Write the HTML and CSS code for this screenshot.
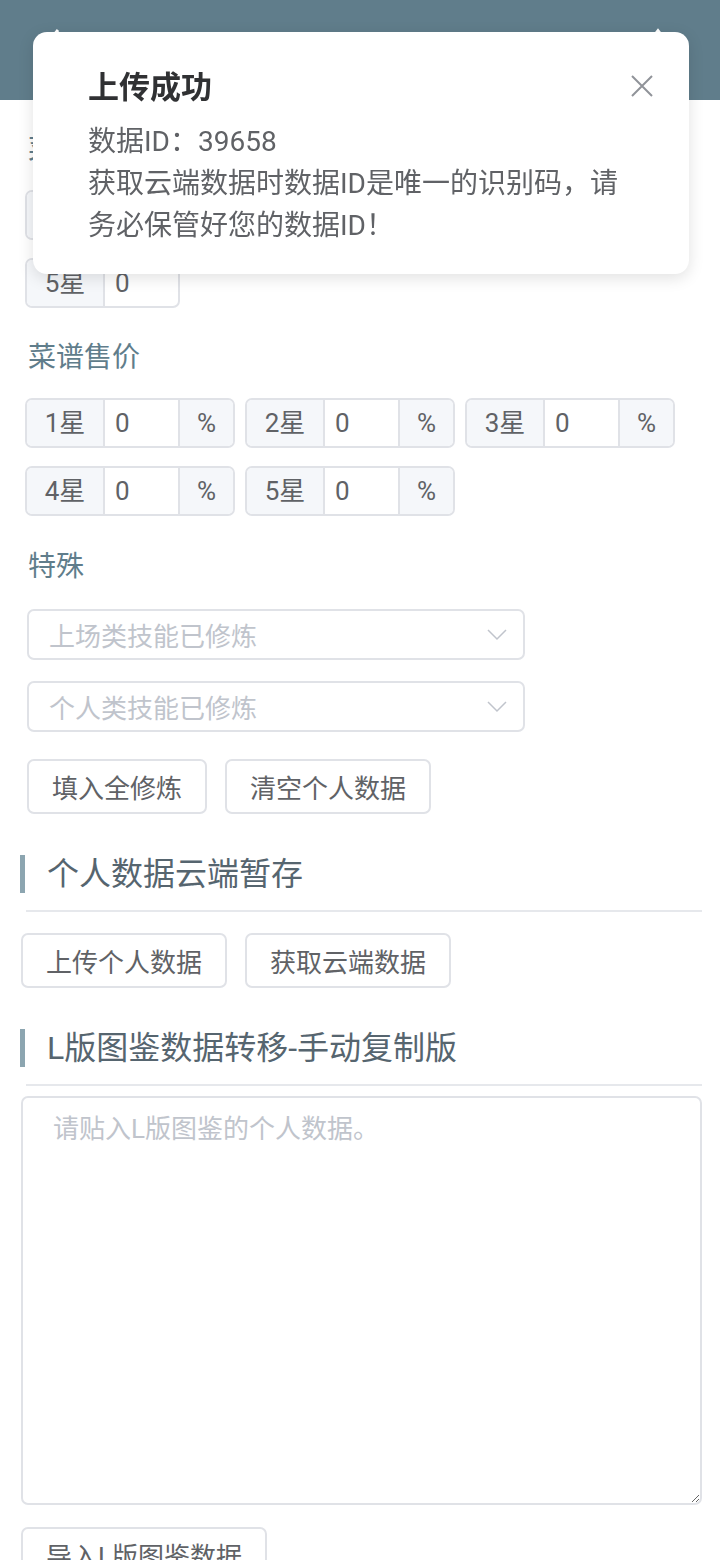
FILE: index.html
```html
<!DOCTYPE html>
<html>
<head>
    <meta charset="UTF-8">
    <title>个人数据</title>
    <link rel="stylesheet" href="styles.css">
</head>
<body>
    <div class="header">
        <span class="header-back">
            <svg width="30" height="44" viewBox="0 0 30 44"><path d="M22 2L6 22l16 20" fill="none" stroke="#fff" stroke-width="3"/></svg>
        </span>
        <span class="header-set">
            <svg width="44" height="44" viewBox="0 0 24 24"><path d="M12 1.5l2 2.6 3.2-.7.6 3.2 3 1.4-1.4 3 1.4 3-3 1.4-.6 3.2-3.2-.7-2 2.6-2-2.6-3.2.7-.6-3.2-3-1.4 1.4-3-1.4-3 3-1.4.6-3.2 3.2.7z" fill="none" stroke="#fff" stroke-width="1.6"/><circle cx="12" cy="12" r="3.5" fill="none" stroke="#fff" stroke-width="1.6"/></svg>
        </span>
    </div>

    <div class="page">
        <div class="form-label">菜谱数量</div>
        <div class="group-list">
            <div class="input-group"><span class="prepend">1星</span><span class="value">0</span></div>
            <div class="input-group"><span class="prepend">2星</span><span class="value">0</span></div>
            <div class="input-group"><span class="prepend">3星</span><span class="value">0</span></div>
            <div class="input-group"><span class="prepend">4星</span><span class="value">0</span></div>
            <div class="input-group"><span class="prepend">5星</span><span class="value">0</span></div>
        </div>

        <div class="form-label">菜谱售价</div>
        <div class="group-list">
            <div class="input-group"><span class="prepend">1星</span><span class="value">0</span><span class="append">%</span></div>
            <div class="input-group"><span class="prepend">2星</span><span class="value">0</span><span class="append">%</span></div>
            <div class="input-group"><span class="prepend">3星</span><span class="value">0</span><span class="append">%</span></div>
            <div class="input-group"><span class="prepend">4星</span><span class="value">0</span><span class="append">%</span></div>
            <div class="input-group"><span class="prepend">5星</span><span class="value">0</span><span class="append">%</span></div>
        </div>

        <div class="form-label label-special">特殊</div>
        <div class="select">
            <span class="placeholder">上场类技能已修炼</span>
            <svg width="20" height="12" viewBox="0 0 20 12"><path d="M1 1l9 9 9-9" fill="none" stroke="#c0c4cc" stroke-width="1.5"/></svg>
        </div>
        <div class="select">
            <span class="placeholder">个人类技能已修炼</span>
            <svg width="20" height="12" viewBox="0 0 20 12"><path d="M1 1l9 9 9-9" fill="none" stroke="#c0c4cc" stroke-width="1.5"/></svg>
        </div>
        <div class="btn-row btn-row-inner">
            <button class="btn">填入全修炼</button>
            <button class="btn">清空个人数据</button>
        </div>

        <div class="section-title">个人数据云端暂存</div>
        <div class="divider"></div>
        <div class="btn-row">
            <button class="btn">上传个人数据</button>
            <button class="btn">获取云端数据</button>
        </div>

        <div class="section-title">L版图鉴数据转移-手动复制版</div>
        <div class="divider divider-tight"></div>
        <textarea class="paste" placeholder="请贴入L版图鉴的个人数据。"></textarea>
        <div class="btn-row btn-row-last">
            <button class="btn">导入L版图鉴数据</button>
        </div>
    </div>

    <div class="notification">
        <div class="notification-title">上传成功</div>
        <div class="notification-body">
            <p>数据ID：39658</p>
            <p>获取云端数据时数据ID是唯一的识别码，请务必保管好您的数据ID！</p>
        </div>
        <span class="notification-close">
            <svg width="22" height="22" viewBox="0 0 22 22"><path d="M1 1l20 20M21 1L1 21" stroke="#909399" stroke-width="2"/></svg>
        </span>
    </div>
</body>
</html>
```

FILE: styles.css
```css
body {
    font-family: Roboto, "Noto Sans CJK SC", sans-serif;
    margin: 0;
    background-color: #fff;
    color: #606266;
}
.header {
    height: 100px;
    background-color: #607d8b;
    display: flex;
    justify-content: space-between;
    align-items: center;
    padding: 0 40px 0 36px;
}
.header svg {
    display: block;
}
.page {
    padding: 0 18px 0 21px;
}
.form-label {
    margin: 30px 0 20px 7px;
    height: 40px;
    line-height: 40px;
    font-size: 28px;
    color: #607d8b;
}
.label-special {
    margin-top: 31px;
    margin-bottom: 22px;
}
.group-list {
    display: flex;
    flex-wrap: wrap;
    gap: 18px 10px;
    padding-left: 4px;
}
.input-group {
    display: flex;
    height: 50px;
    border: 2px solid #e0e2e7;
    border-radius: 7px;
    box-sizing: border-box;
    overflow: hidden;
    font-size: 26px;
    line-height: 46px;
}
.prepend {
    width: 76px;
    text-align: center;
    background-color: #f5f7fa;
    border-right: 2px solid #e0e2e7;
}
.value {
    width: 73px;
    padding-left: 10px;
    box-sizing: border-box;
}
.append {
    width: 53px;
    text-align: center;
    background-color: #f5f7fa;
    border-left: 2px solid #e0e2e7;
}
.select {
    width: 498px;
    height: 51px;
    margin: 0 0 21px 6px;
    border: 2px solid #e0e2e7;
    border-radius: 7px;
    box-sizing: border-box;
    display: flex;
    justify-content: space-between;
    align-items: center;
    padding: 0 16px 0 20px;
}
.placeholder {
    font-size: 26px;
    color: #c0c4cc;
}
.btn-row {
    display: flex;
    gap: 18px;
    margin-bottom: 41px;
}
.btn-row-inner {
    margin-left: 6px;
    margin-top: 27px;
}
.btn {
    font-family: inherit;
    height: 55px;
    padding: 0 23px;
    font-size: 26px;
    color: #606266;
    background-color: #fff;
    border: 2px solid #e0e2e7;
    border-radius: 7px;
}
.section-title {
    border-left: 5px solid #8ca5b0;
    margin-left: -1px;
    height: 38px;
    line-height: 38px;
    padding-left: 22px;
    font-size: 32px;
    color: #56656f;
}
.divider {
    height: 2px;
    background-color: #e6e8ec;
    margin: 17px 0 21px 5px;
}
.divider-tight {
    margin-bottom: 10px;
}
.paste {
    display: block;
    width: 100%;
    height: 409px;
    box-sizing: border-box;
    border: 2px solid #e0e2e7;
    border-radius: 7px;
    padding: 10px 30px;
    font-family: inherit;
    font-size: 26px;
    color: #606266;
}
.paste::placeholder {
    color: #c0c4cc;
}
.btn-row-last {
    margin-top: 22px;
}
.notification {
    position: fixed;
    top: 32px;
    left: 33px;
    width: 656px;
    box-sizing: border-box;
    padding: 35px 60px 27px 55px;
    background-color: #fff;
    border-radius: 14px;
    box-shadow: 0 4px 16px rgba(0, 0, 0, 0.12);
}
.notification-title {
    font-size: 31px;
    font-weight: bold;
    line-height: 42px;
    color: #303133;
    margin-bottom: 12px;
}
.notification-body p {
    margin: 0;
    font-size: 28px;
    line-height: 42px;
    color: #606266;
}
.notification-close {
    position: absolute;
    top: 43px;
    right: 36px;
}
.notification-close svg {
    display: block;
}
```
